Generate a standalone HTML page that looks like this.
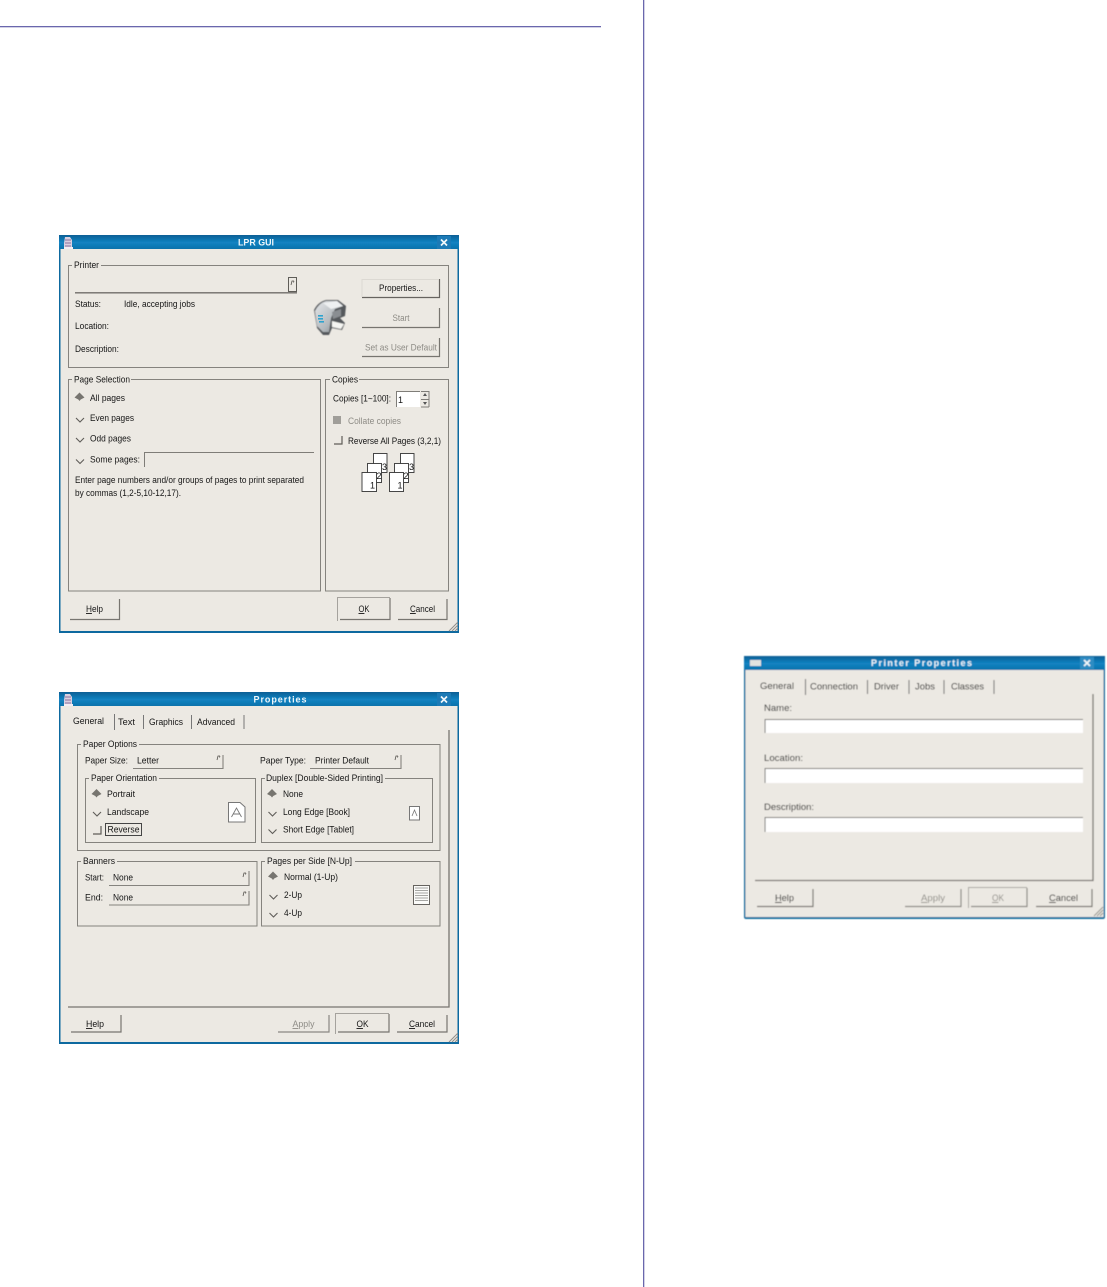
<!DOCTYPE html>
<html><head><meta charset="utf-8"><title>LPR GUI</title>
<style>
html,body{margin:0;padding:0;background:#fff;width:1107px;height:1287px;overflow:hidden}
svg{display:block}
text{font-family:"Liberation Sans",sans-serif;font-size:9px;fill:#151515}
.d{fill:#8e8c86}
.t{font-weight:bold;fill:#eef6fa;font-size:9px;text-anchor:middle}
.m{text-anchor:middle}
.g{fill:none;stroke:#85837e;stroke-width:1}
.l{stroke:#7f7d78;stroke-width:1;fill:none}
.bg{fill:#ece9e3}
</style></head><body>
<svg width="1107" height="1287" viewBox="0 0 1107 1287" xmlns="http://www.w3.org/2000/svg">
<defs>
<linearGradient id="tb" x1="0" y1="0" x2="0" y2="1"><stop offset="0" stop-color="#0b5f95"/><stop offset=".5" stop-color="#1283c2"/><stop offset="1" stop-color="#0f6fa8"/></linearGradient>
<linearGradient id="pb" x1="0" y1="0" x2="1" y2="1"><stop offset="0" stop-color="#e6e8ea"/><stop offset=".6" stop-color="#b4b9bd"/><stop offset="1" stop-color="#777c80"/></linearGradient>
<filter id="b" x="-2%" y="-2%" width="104%" height="104%"><feGaussianBlur stdDeviation=".36"/></filter>
<filter id="b2" x="-2%" y="-2%" width="104%" height="104%"><feGaussianBlur stdDeviation=".5"/></filter>
<filter id="b3" x="-10%" y="-10%" width="120%" height="120%"><feGaussianBlur stdDeviation=".6"/></filter>
<g id="on"><path d="M-5 .5 L0 -4.500 L5 .5 L1.200 2.500 L0 4 L-1.200 2.500Z" fill="#77756f"/></g>
<g id="off"><path d="M-4 -1.500 L0 2.500 L4 -1.500" fill="none" stroke="#5f5d58" stroke-width="1.100"/></g>
<g id="chk"><path d="M0 8 H8 V0" fill="none" stroke="#5f5d58" stroke-width="1.200"/></g>
<g id="arr"><path d="M0 4 L1 0 H3 M3 0 L2.500 1.500" fill="none" stroke="#55534e" stroke-width=".8"/></g>
<g id="grip"><path d="M0 9 L9 0 M3 9 L9 3 M6 9 L9 6" stroke="#8f8d88" stroke-width=".9" fill="none"/></g>
<g id="x"><path d="M-3 -3 L3 3 M3 -3 L-3 3" stroke="#f2f7fa" stroke-width="1.700" fill="none"/></g>
<g id="wic"><path d="M1 0 H6 L8 3 V11 H0 V6 Z" fill="#d9cfe0"/><path d="M1 3 H7 M1 6 H7 M1 9 H7" stroke="#8a6f9c" stroke-width="1"/><rect x="0" y="10" width="9" height="2" fill="#f3eef3"/></g>
</defs>

<rect x="0" y="26" width="601" height="1.300" fill="#6a67ad"/>
<rect x="643" y="0" width="1.300" height="1287" fill="#6a67ad"/>

<!-- LPR GUI -->
<g filter="url(#b)">
<rect x="59" y="235" width="400" height="398" fill="#11699f"/>
<rect x="59" y="235" width="400" height="15" fill="url(#tb)"/>
<rect x="60.500" y="249" width="397" height="382" class="bg"/>
<use href="#wic" x="64" y="237"/>
<rect x="437" y="236" width="14" height="13" fill="#1a7ab6"/>
<use href="#x" x="444" y="242.500"/>
<text x="256" y="245.500" class="t" textLength="36" lengthAdjust="spacingAndGlyphs">LPR GUI</text>

<rect x="68.500" y="265.500" width="380" height="102" class="g"/>
<rect x="72" y="260" width="29" height="10" class="bg"/>
<text x="74" y="268" textLength="25" lengthAdjust="spacingAndGlyphs">Printer</text>
<path d="M75 292.800 H297" stroke="#6f6d68" stroke-width="1.300"/>
<rect x="288.500" y="277.500" width="8" height="14" fill="#ece9e3" stroke="#5f5d58"/>
<use href="#arr" x="291" y="281"/>
<text x="75" y="307" textLength="26" lengthAdjust="spacingAndGlyphs">Status:</text><text x="124" y="307" textLength="71" lengthAdjust="spacingAndGlyphs">Idle, accepting jobs</text>
<text x="75" y="329" textLength="34" lengthAdjust="spacingAndGlyphs">Location:</text>
<text x="75" y="352" textLength="44" lengthAdjust="spacingAndGlyphs">Description:</text>

<!-- printer icon -->
<g filter="url(#b3)">
<path d="M314 310 Q318 302 326 300 L338 300 L346 306 L345 316 L340 318 L345 323 L342 330 L332 328 L329 335 L323 335 L317 328 Z" fill="#55585c"/>
<path d="M315 311 Q319 303 326 301 L337 301 L343 306 L335 309 L331 318 L329 332 L323 332 L317 326 Z" fill="url(#pb)"/>
<path d="M323 303 L337 301 L343 306 L331 309 Z" fill="#eef0f1"/>
<path d="M332 321 L344 324 L341 329 L332 327Z" fill="#f5f5f2"/>
<path d="M332 312 L341 309 L341 316 L333 319Z" fill="#8a8e92"/>
</g>
<rect x="318" y="315" width="5" height="1.600" fill="#2ea3cf"/><rect x="318" y="318" width="5" height="1.600" fill="#2ea3cf"/><rect x="319" y="321" width="5" height="1.600" fill="#2ea3cf"/>

<path d="M362 297.500 H440 M439.500 279 V298" stroke="#66645f" stroke-width="1.200"/>
<path d="M362 297 V279.500 H439" fill="none" stroke="#dcd9d3"/>
<text x="401" y="291" class="m" textLength="44" lengthAdjust="spacingAndGlyphs">Properties...</text>
<path d="M362 327.500 H440 M439.500 308 V328" stroke="#77756f" stroke-width="1.200"/><text x="401" y="321" class="m d" textLength="17" lengthAdjust="spacingAndGlyphs">Start</text>
<path d="M362 356.500 H440 M439.500 338 V357" stroke="#77756f" stroke-width="1.200"/><text x="401" y="350.500" class="m d" textLength="72" lengthAdjust="spacingAndGlyphs">Set as User Default</text>

<rect x="68.500" y="379.500" width="252" height="211.500" class="g"/>
<rect x="72" y="374" width="59" height="10" class="bg"/>
<text x="74" y="382.500" textLength="56" lengthAdjust="spacingAndGlyphs">Page Selection</text>
<rect x="325.500" y="379.500" width="123" height="211.500" class="g"/>
<rect x="330" y="374" width="29" height="10" class="bg"/>
<text x="332" y="382.500" textLength="26" lengthAdjust="spacingAndGlyphs">Copies</text>

<use href="#on" x="79.500" y="397"/><text x="90" y="401" textLength="35" lengthAdjust="spacingAndGlyphs">All pages</text>
<use href="#off" x="80" y="419.500"/><text x="90" y="421" textLength="44" lengthAdjust="spacingAndGlyphs">Even pages</text>
<use href="#off" x="80" y="439.500"/><text x="90" y="441.500" textLength="41" lengthAdjust="spacingAndGlyphs">Odd pages</text>
<use href="#off" x="80" y="461"/><text x="90" y="462.500" textLength="50" lengthAdjust="spacingAndGlyphs">Some pages:</text>
<path d="M144.500 467 V452.500 H314" class="l"/>
<text x="75" y="483" textLength="229" lengthAdjust="spacingAndGlyphs">Enter page numbers and/or groups of pages to print separated</text>
<text x="75" y="496" textLength="106" lengthAdjust="spacingAndGlyphs">by commas (1,2-5,10-12,17).</text>

<text x="333" y="401.500" textLength="58" lengthAdjust="spacingAndGlyphs">Copies [1~100]:</text>
<rect x="396" y="391" width="24" height="16" fill="#fff"/><path d="M396.500 407 V391.500 H420" class="l"/>
<text x="398" y="403">1</text>
<path d="M421 391.500 H429 V407 M421 399.500 H429 M421 407 H429" class="l"/>
<path d="M425 393 L427 396 H423Z M425 405 L427 402 H423Z" fill="#555"/>
<rect x="333" y="416" width="8" height="8" fill="#a09e99"/><text x="348" y="424" class="d" textLength="53" lengthAdjust="spacingAndGlyphs">Collate copies</text>
<use href="#chk" x="334" y="436"/><text x="348" y="444" textLength="93" lengthAdjust="spacingAndGlyphs">Reverse All Pages (3,2,1)</text>

<g fill="#fff" stroke="#333" stroke-width=".9">
<rect x="373.500" y="453.500" width="13.500" height="19"/><rect x="367.500" y="463.500" width="14" height="19"/><rect x="362" y="472.500" width="14.500" height="19"/>
<rect x="400.500" y="453.500" width="13.500" height="19"/><rect x="394.500" y="463.500" width="14" height="19"/><rect x="389.500" y="472.500" width="14" height="19"/>
</g>
<g style="font-size:8px"><text x="382" y="470">3</text><text x="376.500" y="479">2</text><text x="370" y="488.500">1</text><text x="409" y="470">3</text><text x="403.500" y="479">2</text><text x="397.500" y="488.500">1</text></g>

<path d="M70 619.500 H119.500 V599" fill="none" stroke="#77756f" stroke-width="1.200"/>
<text x="94.500" y="612" class="m" textLength="17" lengthAdjust="spacingAndGlyphs"><tspan text-decoration="underline">H</tspan>elp</text>
<path d="M337.500 621 V597.500 H390" class="l" stroke-opacity=".65"/><path d="M340 619.500 H390 V598" fill="none" stroke="#77756f" stroke-width="1.200"/>
<text x="364" y="612" class="m" textLength="11" lengthAdjust="spacingAndGlyphs"><tspan text-decoration="underline">O</tspan>K</text>
<path d="M398 619.500 H447 V599" fill="none" stroke="#77756f" stroke-width="1.200"/>
<text x="422.500" y="612" class="m" textLength="25" lengthAdjust="spacingAndGlyphs"><tspan text-decoration="underline">C</tspan>ancel</text>
<use href="#grip" x="449" y="622"/>
</g>

<!-- Properties -->
<g filter="url(#b)">
<rect x="59" y="692" width="400" height="352" fill="#11699f"/>
<rect x="59" y="692" width="400" height="15" fill="url(#tb)"/>
<rect x="60.500" y="706" width="397" height="336" class="bg"/>
<use href="#wic" x="64" y="694"/>
<rect x="437" y="693" width="14" height="13" fill="#1a7ab6"/>
<use href="#x" x="444" y="699.500"/>
<text x="280" y="702.500" class="t" textLength="53">Properties</text>

<text x="73" y="724" textLength="31" lengthAdjust="spacingAndGlyphs">General</text><text x="118" y="725" textLength="17" lengthAdjust="spacingAndGlyphs">Text</text><text x="149" y="725" textLength="34" lengthAdjust="spacingAndGlyphs">Graphics</text><text x="197" y="725" textLength="38" lengthAdjust="spacingAndGlyphs">Advanced</text>
<path d="M114.500 714 V730 M143.500 715 V729 M191.500 715 V729 M244 715 V729" stroke="#777" stroke-width="1"/>
<path d="M449 730 V1007 H68" fill="none" stroke="#77756f" stroke-width="1.300"/>

<rect x="77.500" y="744.500" width="362.500" height="106" class="g"/>
<rect x="81" y="739" width="58" height="10" class="bg"/>
<text x="83" y="747" textLength="54" lengthAdjust="spacingAndGlyphs">Paper Options</text>
<text x="85" y="763.500" textLength="43" lengthAdjust="spacingAndGlyphs">Paper Size:</text>
<path d="M133 768.500 H223 V755" fill="none" stroke="#85837e" stroke-width="1.100"/><text x="137" y="763.500" textLength="22" lengthAdjust="spacingAndGlyphs">Letter</text><use href="#arr" x="217" y="756"/>
<text x="260" y="763.500" textLength="46" lengthAdjust="spacingAndGlyphs">Paper Type:</text>
<path d="M310 768.500 H401 V755" fill="none" stroke="#85837e" stroke-width="1.100"/><text x="315" y="763.500" textLength="54" lengthAdjust="spacingAndGlyphs">Printer Default</text><use href="#arr" x="395" y="756"/>

<rect x="85.500" y="778.500" width="170" height="64" class="g"/>
<rect x="89" y="773" width="70" height="10" class="bg"/>
<text x="91" y="781" textLength="66" lengthAdjust="spacingAndGlyphs">Paper Orientation</text>
<use href="#on" x="96.500" y="793.500"/><text x="107" y="797" textLength="28" lengthAdjust="spacingAndGlyphs">Portrait</text>
<use href="#off" x="97" y="813.500"/><text x="107" y="815" textLength="42" lengthAdjust="spacingAndGlyphs">Landscape</text>
<use href="#chk" x="93" y="826"/>
<rect x="105.500" y="823.500" width="36" height="12" fill="none" stroke="#444"/><text x="107.500" y="832.500" textLength="32" lengthAdjust="spacingAndGlyphs">Reverse</text>
<path d="M228.500 802.500 H240 L245 807 V822 H228.500Z" fill="#fff" stroke="#777"/>
<path d="M231.500 817 L236.500 808 L241.500 817 M233.500 814 H239.500" fill="none" stroke="#777" stroke-width=".9"/>

<rect x="261.500" y="778.500" width="171" height="64" class="g"/>
<rect x="265" y="773" width="120" height="10" class="bg"/>
<text x="266" y="781" textLength="117" lengthAdjust="spacingAndGlyphs">Duplex [Double-Sided Printing]</text>
<use href="#on" x="272" y="793.500"/><text x="283" y="797" textLength="20" lengthAdjust="spacingAndGlyphs">None</text>
<use href="#off" x="272.500" y="813.500"/><text x="283" y="815" textLength="67" lengthAdjust="spacingAndGlyphs">Long Edge [Book]</text>
<use href="#off" x="272.500" y="831"/><text x="283" y="832.500" textLength="71" lengthAdjust="spacingAndGlyphs">Short Edge [Tablet]</text>
<path d="M409.500 806.500 H419.500 V820 H409.500Z" fill="#fff" stroke="#777"/>
<path d="M412 816 L414.500 810 L417 816" fill="none" stroke="#777" stroke-width=".8"/>

<rect x="77.500" y="861.500" width="179.500" height="64.500" class="g"/>
<rect x="81" y="856" width="36" height="10" class="bg"/>
<text x="83" y="864" textLength="32" lengthAdjust="spacingAndGlyphs">Banners</text>
<text x="85" y="880.500" textLength="19" lengthAdjust="spacingAndGlyphs">Start:</text><text x="113" y="880.500" textLength="20" lengthAdjust="spacingAndGlyphs">None</text>
<path d="M109 885.500 H249 V871" fill="none" stroke="#85837e" stroke-width="1.100"/><use href="#arr" x="243" y="873"/>
<text x="85" y="900.500" textLength="18" lengthAdjust="spacingAndGlyphs">End:</text><text x="113" y="900.500" textLength="20" lengthAdjust="spacingAndGlyphs">None</text>
<path d="M109 905 H249 V891" fill="none" stroke="#85837e" stroke-width="1.100"/><use href="#arr" x="243" y="892"/>

<rect x="261.500" y="861.500" width="178.500" height="64.500" class="g"/>
<rect x="265" y="856" width="90" height="10" class="bg"/>
<text x="267" y="864" textLength="85" lengthAdjust="spacingAndGlyphs">Pages per Side [N-Up]</text>
<use href="#on" x="273" y="876"/><text x="284" y="880" textLength="54" lengthAdjust="spacingAndGlyphs">Normal (1-Up)</text>
<use href="#off" x="273.500" y="896.500"/><text x="284" y="898" textLength="18" lengthAdjust="spacingAndGlyphs">2-Up</text>
<use href="#off" x="273.500" y="914.500"/><text x="284" y="916" textLength="18" lengthAdjust="spacingAndGlyphs">4-Up</text>
<rect x="413.500" y="885.500" width="16" height="19" fill="#fbfbf9" stroke="#66645f"/>
<path d="M415 888 H428 M415 890.500 H428 M415 893 H428 M415 895.500 H428 M415 898 H428 M415 900.500 H428" stroke="#8a8a87" stroke-width=".8"/>

<path d="M71 1032 H121 V1015" fill="none" stroke="#77756f" stroke-width="1.200"/>
<text x="95" y="1027" class="m" textLength="18" lengthAdjust="spacingAndGlyphs"><tspan text-decoration="underline">H</tspan>elp</text>
<path d="M278 1032 H329 V1015" fill="none" stroke="#8a8883" stroke-width="1.200"/>
<text x="303.500" y="1027" class="m d" textLength="22" lengthAdjust="spacingAndGlyphs"><tspan text-decoration="underline">A</tspan>pply</text>
<path d="M335.500 1034 V1013.500 H389" class="l" stroke-opacity=".65"/><path d="M338 1032 H389 V1014" fill="none" stroke="#77756f" stroke-width="1.200"/>
<text x="362.500" y="1027" class="m" textLength="12" lengthAdjust="spacingAndGlyphs"><tspan text-decoration="underline">O</tspan>K</text>
<path d="M397 1032 H447 V1015" fill="none" stroke="#77756f" stroke-width="1.200"/>
<text x="422" y="1027" class="m" textLength="26" lengthAdjust="spacingAndGlyphs"><tspan text-decoration="underline">C</tspan>ancel</text>
<use href="#grip" x="449" y="1033"/>
</g>

<!-- Printer Properties -->
<g filter="url(#b2)">
<rect x="744" y="656" width="361" height="263" rx="2" fill="#176f9f"/>
<rect x="744" y="656" width="361" height="15" fill="url(#tb)"/>
<rect x="745.500" y="670" width="358" height="247" class="bg"/>
<rect x="750" y="660" width="11" height="6" fill="#e4e4e0"/>
<rect x="1080" y="657" width="14" height="12" fill="#2f8cc3"/>
<use href="#x" x="1087" y="663"/>
<text x="921.500" y="666" class="t" textLength="101">Printer Properties</text>

<text x="760" y="689" textLength="34" lengthAdjust="spacingAndGlyphs">General</text><text x="810" y="689.500" textLength="48" lengthAdjust="spacingAndGlyphs">Connection</text><text x="874" y="689.500" textLength="25" lengthAdjust="spacingAndGlyphs">Driver</text><text x="915" y="689.500" textLength="20" lengthAdjust="spacingAndGlyphs">Jobs</text><text x="951" y="689.500" textLength="33" lengthAdjust="spacingAndGlyphs">Classes</text>
<path d="M805.500 679 V695 M867.500 680 V694 M909 680 V694 M944 680 V694 M994 680 V694" stroke="#777" stroke-width="1.100"/>
<path d="M1093 694 V880.500 H755" fill="none" stroke="#77756f" stroke-width="1.300"/>

<text x="764" y="711" textLength="28" lengthAdjust="spacingAndGlyphs">Name:</text>
<rect x="764" y="719" width="319" height="14" fill="#fff"/><path d="M765 733 V719.500 H1083" fill="none" stroke="#77756f" stroke-width="1.100"/>
<text x="764" y="761" textLength="39" lengthAdjust="spacingAndGlyphs">Location:</text>
<rect x="764" y="768" width="319" height="15" fill="#fff"/><path d="M765 783 V768.500 H1083" fill="none" stroke="#77756f" stroke-width="1.100"/>
<text x="764" y="810" textLength="50" lengthAdjust="spacingAndGlyphs">Description:</text>
<rect x="764" y="817" width="319" height="15" fill="#fff"/><path d="M765 832 V817.500 H1083" fill="none" stroke="#77756f" stroke-width="1.100"/>

<path d="M757 906.500 H813 V889" fill="none" stroke="#77756f" stroke-width="1.200"/>
<text x="784.500" y="901" class="m" textLength="19" lengthAdjust="spacingAndGlyphs"><tspan text-decoration="underline">H</tspan>elp</text>
<path d="M905 906.500 H961 V889" fill="none" stroke="#8a8883" stroke-width="1.200"/>
<text x="933" y="901" class="m d" textLength="24" lengthAdjust="spacingAndGlyphs"><tspan text-decoration="underline">A</tspan>pply</text>
<path d="M968.500 908 V887.500 H1027" fill="none" stroke="#8a8883" stroke-opacity=".7"/><path d="M971 906.500 H1027 V888" fill="none" stroke="#8a8883" stroke-width="1.200"/>
<text x="998" y="901" class="m d" textLength="12" lengthAdjust="spacingAndGlyphs"><tspan text-decoration="underline">O</tspan>K</text>
<path d="M1036 906.500 H1092 V889" fill="none" stroke="#77756f" stroke-width="1.200"/>
<text x="1063.500" y="901" class="m" textLength="29" lengthAdjust="spacingAndGlyphs"><tspan text-decoration="underline">C</tspan>ancel</text>
<use href="#grip" x="1094" y="907"/>
</g>
</svg>
</body></html>
